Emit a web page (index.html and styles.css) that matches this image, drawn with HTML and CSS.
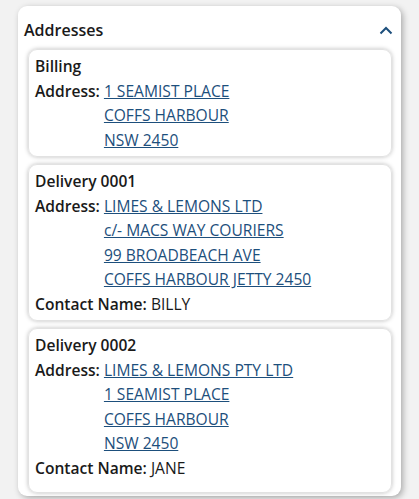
FILE: index.html
```html
<!DOCTYPE html>
<html lang="en">
<head>
    <meta charset="UTF-8">
    <meta name="viewport" content="width=device-width, initial-scale=1.0">
    <title>Addresses</title>
    <link rel="stylesheet" href="styles.css">
</head>
<body>
    <div class="panel">
        <div class="panel-head">
            <h2>Addresses</h2>
            <svg class="chevron" width="14" height="9" viewBox="0 0 14 9">
                <path d="M1.5 7.5 L7 2 L12.5 7.5" fill="none" stroke="#1d4f7c" stroke-width="2"/>
            </svg>
        </div>

        <div class="address">
            <div class="title">Billing</div>
            <div class="row">
                <span class="label">Address:</span>
                <div class="lines">
                    <a href="#">1 SEAMIST PLACE</a>
                    <a href="#">COFFS HARBOUR</a>
                    <a href="#">NSW 2450</a>
                </div>
            </div>
        </div>

        <div class="address">
            <div class="title">Delivery 0001</div>
            <div class="row">
                <span class="label">Address:</span>
                <div class="lines">
                    <a href="#">LIMES &amp; LEMONS LTD</a>
                    <a href="#">c/- MACS WAY COURIERS</a>
                    <a href="#">99 BROADBEACH AVE</a>
                    <a href="#">COFFS HARBOUR JETTY 2450</a>
                </div>
            </div>
            <div class="row">
                <span class="label">Contact Name:</span>
                <span>BILLY</span>
            </div>
        </div>

        <div class="address last">
            <div class="title">Delivery 0002</div>
            <div class="row">
                <span class="label">Address:</span>
                <div class="lines">
                    <a href="#">LIMES &amp; LEMONS PTY LTD</a>
                    <a href="#">1 SEAMIST PLACE</a>
                    <a href="#">COFFS HARBOUR</a>
                    <a href="#">NSW 2450</a>
                </div>
            </div>
            <div class="row">
                <span class="label">Contact Name:</span>
                <span>JANE</span>
            </div>
        </div>
    </div>
</body>
</html>
```

FILE: styles.css
```css
body {
    font-family: "Open Sans", sans-serif;
    font-size: 15.6px;
    line-height: 24.5px;
    color: #1a1a1a;
    background-color: #f2f2f2;
    margin: 0;
    padding: 6px 18px 7px 18px;
}
.panel {
    background-color: #fff;
    border-radius: 9px;
    box-shadow: 2px 2px 6px rgba(0, 0, 0, 0.3);
    padding: 11px 9px 3px 10px;
}
.panel-head {
    display: flex;
    justify-content: space-between;
    align-items: center;
    margin: 0 -1px 5px -4px;
    height: 27px;
}
.panel-head h2 {
    font-size: 16px;
    font-weight: 600;
    margin: 0;
    color: #1a1a1a;
}
.address {
    border: 1px solid #e2e2e2;
    border-radius: 9px;
    box-shadow: 0 0 4px rgba(0, 0, 0, 0.25);
    padding: 4px 6px 4px 6px;
    margin-bottom: 7px;
}
.address.last {
    padding-bottom: 12px;
    margin-bottom: 0;
}
.title {
    font-weight: 600;
}
.row {
    display: flex;
    gap: 4px;
}
.label {
    font-weight: 600;
}
.lines {
    display: flex;
    flex-direction: column;
    align-items: flex-start;
}
.lines a {
    color: #1d4f7c;
    text-decoration: underline;
}
```
